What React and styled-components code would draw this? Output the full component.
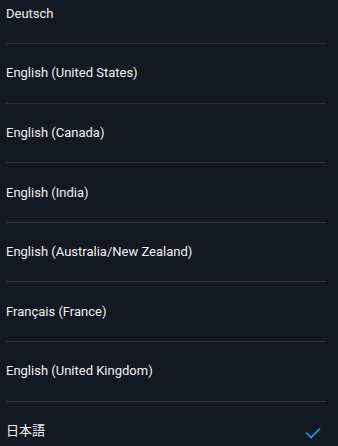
import React from "react";
import styled, { createGlobalStyle } from "styled-components";

const Global = createGlobalStyle`
  html, body {
    margin: 0;
    padding: 0;
    background: #141821;
    overflow: hidden;
  }
  body {
    font-family: Roboto, "Noto Sans CJK JP", sans-serif;
  }
`;

const List = styled.ul`
  list-style: none;
  margin: -15.5px 12px 0 6px;
  padding: 0;
`;

const Row = styled.li`
  box-sizing: border-box;
  height: 59.6px;
  display: flex;
  align-items: center;
  justify-content: space-between;
  padding-bottom: 0;
  border-bottom: 1px solid ${(p) => (p.$last ? "transparent" : "#2d3036")};
  color: #f0f1f2;
  font-size: 13px;
  cursor: pointer;
`;

const Label = styled.span`
  line-height: 16px;
`;

const Check = styled.svg`
  width: 16px;
  height: 12px;
  margin-top: 4px;
  margin-right: 5px;
`;

const languages = [
  "Deutsch",
  "English (United States)",
  "English (Canada)",
  "English (India)",
  "English (Australia/New Zealand)",
  "Français (France)",
  "English (United Kingdom)",
  "日本語",
];

const selected = "日本語";

export default function App() {
  return (
    <>
      <Global />
      <List>
        {languages.map((lang, i) => (
          <Row key={lang} $last={i === languages.length - 1}>
            <Label>{lang}</Label>
            {lang === selected && (
              <Check viewBox="0 0 16 12">
                <path d="M1 5.5 L6 10.5 L15 1.5" fill="none" stroke="#1ea5e0" strokeWidth="1.6" />
              </Check>
            )}
          </Row>
        ))}
      </List>
    </>
  );
}
